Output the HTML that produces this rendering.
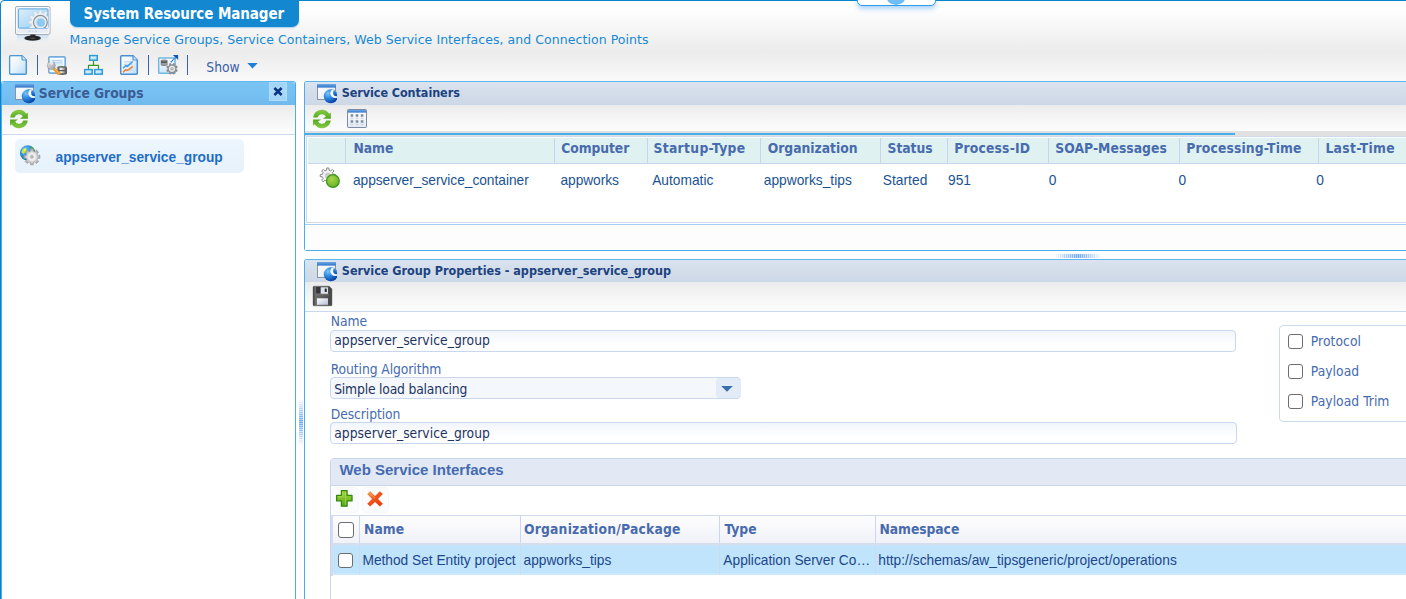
<!DOCTYPE html>
<html><head><meta charset="utf-8"><title>System Resource Manager</title>
<style>
*{box-sizing:border-box;margin:0;padding:0}
html,body{width:1406px;height:599px;overflow:hidden;background:#fff}
body{position:relative;font-family:"Liberation Sans",sans-serif;font-size:13.75px}
.a,.t,svg{position:absolute}
svg{overflow:visible}
.t{white-space:nowrap;line-height:1}
.tah{font-family:"DejaVu Sans Condensed","DejaVu Sans","Liberation Sans",sans-serif}
.ver{font-family:"DejaVu Sans","Liberation Sans",sans-serif}
.ari{font-family:"Liberation Sans",sans-serif}
#win{left:0;top:0;width:1420px;height:620px;border:1px solid #0a82cc;border-radius:4px 0 0 0;background:linear-gradient(#fff 0,#fff 6px,#ececec 50px,#eee 56px,#fafafa 80px,#fff 81px)}
#tab{left:70px;top:0;width:229px;height:27px;background:#1388d0;border-radius:0 0 7px 7px;box-shadow:0 1px 1.5px rgba(20,135,207,.35)}
#topw{left:857px;top:-6px;width:79px;height:12px;background:#fff;border:1px solid #2f9ce6;border-radius:5px;box-shadow:0 3px 5px rgba(70,160,240,.45);overflow:hidden}
#topw i{position:absolute;left:28px;top:-9.500px;width:20px;height:19px;border-radius:50%;background:#6ebcf8}
.sep{width:1px;height:20px;top:55px;background:#3a62ac}
/* panels */
.pn{border:1px solid #4aaeea;border-top-color:#5db6ee;background:#fff}
#lp{left:1px;top:81px;width:295px;height:530px;border-radius:3px 3px 0 0}
#lph{left:2px;top:82px;width:293px;height:23px;background:linear-gradient(#7ac4f4 0,#76c0f2 50%,#6fb9ee 100%);border-radius:3px 3px 0 0}
.tb{background:linear-gradient(#ebebeb,#f4f4f4 45%,#fdfdfd)}
#lptb{left:2px;top:105px;width:293px;height:30px;border-bottom:1px solid #c9d8ec}
#cls{left:269px;top:82px;width:18px;height:19px;background:linear-gradient(#a0d3f7,#aedaf8 50%,#a0d2f6);border:1px solid #b2dbf8}
#ti{left:15px;top:139px;width:229px;height:34px;border-radius:5px;background:linear-gradient(#edf6fd,#e6f1fa)}
#vh{opacity:.85;left:299px;top:398px;width:4px;height:48px;background:repeating-linear-gradient(#4f95ea 0,#4f95ea 1px,#a9c9f4 1px,#a9c9f4 2px);-webkit-mask-image:linear-gradient(transparent,#000 50%,transparent);mask-image:linear-gradient(transparent,#000 50%,transparent)}
#hh{opacity:.85;left:1054px;top:254px;width:48px;height:4px;background:repeating-linear-gradient(90deg,#4f95ea 0,#4f95ea 1px,#a9c9f4 1px,#a9c9f4 2px);-webkit-mask-image:linear-gradient(90deg,transparent,#000 50%,transparent);mask-image:linear-gradient(90deg,transparent,#000 50%,transparent)}
#p1{left:304px;top:81px;width:1120px;height:170px;border-radius:3px 0 0 3px}
#p2{left:304px;top:259px;width:1120px;height:360px;border-radius:3px 0 0 0}
.ph{left:305px;width:1110px;border-radius:2px 0 0 0;background:linear-gradient(#dae3ef,#d3ddea 50%,#cdd8e7)}
#p1h{top:82px;height:23px;border-radius:3px 0 0 0}
#p2h{top:260px;height:22px;border-radius:3px 0 0 0}
#p1tb{left:305px;top:105px;width:1110px;height:26px}
#p2tb{left:305px;top:282px;width:1110px;height:30px;border-bottom:1px solid #c9d8ec}
#gband{left:305px;top:131px;width:1110px;height:5px;background:#e1e1e1}
#bline{left:305px;top:133px;width:930px;height:2px;background:#46aee9}
#g1{left:306px;top:136px;width:1110px;height:87px;border:1px solid #d0daee;background:#fff}
#g1h{left:308px;top:138px;width:1100px;height:26px;background:#dff1f1;border-bottom:1px solid #c9d5ea}
.cs{width:1px;top:138px;height:25px;background:#c9d3ec}
#g1f{left:305px;top:224px;width:1110px;height:26px;border-top:1px solid #a9cdf0;background:#fdfdfd}
/* form */
.inp{height:22px;border:1px solid #c9d7ec;border-radius:4px;background:linear-gradient(#f1f5fa,#fff 70%)}
#sel{background:#f4f7fc}
#selb{left:716px;top:378px;width:25px;height:20px;background:#e3ebf6;border-radius:4px}
#fs{left:1279px;top:325px;width:140px;height:97px;border:1px solid #cddaee;border-radius:4px}
.cb{width:15px;height:15px;border:1.4px solid #6d6d6d;border-radius:3px;background:#fff}
#ws{left:330px;top:458px;width:1090px;height:160px;border:1px solid #c9d5ea;border-radius:4px 0 0 0;background:#fff}
#wsh{left:331px;top:459px;width:1080px;height:27px;background:#e2e8f4;border-bottom:1px solid #cbd6ea;border-radius:3px 0 0 0}
#g2h{left:331px;top:515px;width:1080px;height:28px;background:linear-gradient(#fdfdfe,#f1f2f8);border-top:1px solid #cfd9ec}
#g2b{left:331px;top:543px;width:1080px;height:3.400px;background:linear-gradient(#d6ddec 0,#d6ddec 2px,#c8e3f7 2px)}
#g2l{left:331px;top:516px;width:2px;height:60px;background:#d4ddf0}
#g2r{left:333px;top:546.400px;width:1080px;height:28.900px;background:#bfe4fb;border-bottom:2px solid #cbe9fc}
.cs2{width:1px;top:516px;height:27px;background:#cdd6ec}
.rs{width:1px;top:546px;height:29px;background:#cadcec}
.tbb{width:27px;height:26px;border-radius:5px;background:#fbfcfd;border:1px solid #f6f7fa}
#tabt{left:83.5px;top:7.0px;font-size:15px;color:#fff;font-weight:bold;letter-spacing:-0.091px;}
#sub{left:69.5px;top:34.0px;font-size:12.5px;color:#1889d2;letter-spacing:0.063px;}
#show{left:206.3px;top:61.0px;font-size:13.75px;color:#3a5fa8;}
#sg{left:38.8px;top:87.0px;font-size:13.75px;color:#3c5c94;font-weight:bold;letter-spacing:-0.062px;}
#tree{left:55.5px;top:151.0px;font-size:13.75px;color:#1e6ec8;font-weight:bold;letter-spacing:-0.009px;}
#sc{left:341.7px;top:87.0px;font-size:12.5px;color:#1c4280;font-weight:bold;letter-spacing:-0.071px;}
#h1{left:353.4px;top:142.0px;font-size:13.75px;color:#486bad;font-weight:bold;}
#h2{left:561.3px;top:142.0px;font-size:13.75px;color:#486bad;font-weight:bold;letter-spacing:-0.086px;}
#h3{left:653.5px;top:142.0px;font-size:13.75px;color:#486bad;font-weight:bold;letter-spacing:0.318px;}
#h4{left:767.7px;top:142.0px;font-size:13.75px;color:#486bad;font-weight:bold;letter-spacing:-0.009px;}
#h5{left:887.6px;top:142.0px;font-size:13.75px;color:#486bad;font-weight:bold;letter-spacing:-0.06px;}
#h6{left:954.2px;top:142.0px;font-size:13.75px;color:#486bad;font-weight:bold;letter-spacing:0.189px;}
#h7{left:1055.3px;top:142.0px;font-size:13.75px;color:#486bad;font-weight:bold;letter-spacing:0.042px;}
#h8{left:1186.3px;top:142.0px;font-size:13.75px;color:#486bad;font-weight:bold;letter-spacing:0.15px;}
#h9{left:1325.4px;top:142.0px;font-size:13.75px;color:#486bad;font-weight:bold;letter-spacing:0.325px;}
#r1{left:352.9px;top:174.0px;font-size:13.75px;color:#1b5392;letter-spacing:-0.027px;}
#r2{left:560.5px;top:174.0px;font-size:13.75px;color:#1b5392;letter-spacing:-0.071px;}
#r3{left:652.2px;top:174.0px;font-size:13.75px;color:#1b5392;}
#r4{left:763.8px;top:174.0px;font-size:13.75px;color:#1b5392;letter-spacing:0.008px;}
#r5{left:882.7px;top:174.0px;font-size:13.75px;color:#1b5392;letter-spacing:0.05px;}
#r6{left:948.0px;top:174.0px;font-size:13.75px;color:#1b5392;}
#r7{left:1048.8px;top:174.0px;font-size:13.75px;color:#1b5392;}
#r8{left:1178.6px;top:174.0px;font-size:13.75px;color:#1b5392;}
#r9{left:1316.2px;top:174.0px;font-size:13.75px;color:#1b5392;}
#sgp{left:341.8px;top:265.0px;font-size:12.5px;color:#1c4280;font-weight:bold;letter-spacing:-0.016px;}
#l1{left:330.7px;top:315.0px;font-size:13.75px;color:#456bb0;}
#l2{left:330.7px;top:363.0px;font-size:13.75px;color:#456bb0;letter-spacing:-0.081px;}
#l3{left:330.7px;top:408.0px;font-size:13.75px;color:#456bb0;letter-spacing:-0.07px;}
#v1{left:334.2px;top:334.0px;font-size:13.75px;color:#1d3460;letter-spacing:0.032px;}
#v2{left:334.2px;top:383.0px;font-size:13.75px;color:#1d3460;letter-spacing:-0.185px;}
#v3{left:334.2px;top:427.0px;font-size:13.75px;color:#1d3460;letter-spacing:0.032px;}
#c1{left:1310.8px;top:335.0px;font-size:13.75px;color:#456bb0;letter-spacing:0.057px;}
#c2{left:1310.8px;top:365.0px;font-size:13.75px;color:#456bb0;letter-spacing:0.017px;}
#c3{left:1310.8px;top:395.0px;font-size:13.75px;color:#456bb0;letter-spacing:0.036px;}
#wsi{left:339.4px;top:462.0px;font-size:15px;color:#456bb0;font-weight:bold;letter-spacing:0.01px;}
#gh1{left:364.1px;top:523.0px;font-size:13.75px;color:#486bad;font-weight:bold;}
#gh2{left:524.0px;top:523.0px;font-size:13.75px;color:#486bad;font-weight:bold;letter-spacing:0.2px;}
#gh3{left:724.5px;top:523.0px;font-size:13.75px;color:#486bad;font-weight:bold;}
#gh4{left:879.5px;top:523.0px;font-size:13.75px;color:#486bad;font-weight:bold;letter-spacing:-0.062px;}
#q1{left:362.5px;top:554.0px;font-size:13.75px;color:#22468a;letter-spacing:-0.021px;}
#q2{left:523.5px;top:554.0px;font-size:13.75px;color:#22468a;}
#q3{left:723.3px;top:554.0px;font-size:13.75px;color:#22468a;letter-spacing:0.005px;}
#q4{left:878.3px;top:554.0px;font-size:13.75px;color:#22468a;letter-spacing:0.009px;}
</style></head><body>
<div id="win" class="a"></div>
<div id="topw" class="a"><i></i></div>
<div id="tab" class="a"></div>
<svg style="left:14px;top:5px" width="38" height="40" viewBox="14 5 38 40">
<defs>
<linearGradient id="scr" x1="0" y1="0" x2="1" y2="1"><stop offset="0" stop-color="#dceefc"/><stop offset=".55" stop-color="#b3dbf7"/><stop offset="1" stop-color="#86c6f1"/></linearGradient>
<linearGradient id="refl" x1="0" y1="0" x2="0" y2="1"><stop offset="0" stop-color="#b9d9f3" stop-opacity=".8"/><stop offset="1" stop-color="#d9ebf9" stop-opacity="0"/></linearGradient>
<clipPath id="scrc"><rect x="18.5" y="9" width="29.5" height="19"/></clipPath>
<radialGradient id="base"><stop offset="0" stop-color="#555"/><stop offset=".6" stop-color="#1c1c1c"/><stop offset="1" stop-color="#333"/></radialGradient>
</defs>
<rect x="17" y="34.5" width="31.5" height="8.5" fill="url(#refl)"/>
<rect x="15.5" y="6.5" width="34.5" height="28" rx="1.5" fill="#e8ecf5" stroke="#a2aeb9" stroke-width="1"/>
<rect x="16.5" y="7.5" width="32.5" height="26" rx="1" fill="none" stroke="#f8f9fc" stroke-width="1"/>
<rect x="18.4" y="8.9" width="29.6" height="19.2" rx="1" fill="url(#scr)" stroke="#5aaae3" stroke-width="1"/>
<g clip-path="url(#scrc)">
<g transform="translate(40.400 22.300)">
<path d="M-1.45 -9.19L-1.08 -12.15L1.08 -12.15L1.45 -9.19L3.33 -8.68L5.14 -11.07L7.02 -9.98L5.85 -7.23L7.23 -5.85L9.98 -7.02L11.07 -5.14L8.68 -3.33L9.19 -1.45L12.15 -1.08L12.15 1.08L9.19 1.45L8.68 3.33L11.07 5.14L9.98 7.02L7.23 5.85L5.85 7.23L7.02 9.98L5.14 11.07L3.33 8.68L1.45 9.19L1.08 12.15L-1.08 12.15L-1.45 9.19L-3.33 8.68L-5.14 11.07L-7.02 9.98L-5.85 7.23L-7.23 5.85L-9.98 7.02L-11.07 5.14L-8.68 3.33L-9.19 1.45L-12.15 1.08L-12.15 -1.08L-9.19 -1.45L-8.68 -3.33L-11.07 -5.14L-9.98 -7.02L-7.23 -5.85L-5.85 -7.23L-7.02 -9.98L-5.14 -11.07L-3.33 -8.68z" fill="#eef0f2" stroke="#c5ced6" stroke-width=".5"/>
<circle r="6.900" fill="#c5d9e8" stroke="#8a959d" stroke-width="1.300"/>
<circle r="5.300" fill="none" stroke="#e4edf3" stroke-width="1.500"/>
<circle cx=".6" cy=".4" r="3.900" fill="#8ccaf4"/>
</g></g>
<path d="M28.5 31.2h2M32.3 31.2h.8M35 31.2h2" stroke="#aab4d2" stroke-width=".6"/>
<path d="M30.4 34.6h5v2.6h-5z" fill="#2a2a2a"/>
<ellipse cx="32.6" cy="38.2" rx="8.3" ry="2.6" fill="url(#base)"/>
</svg>
<svg style="left:8px;top:54px" width="20" height="22" viewBox="8 54 20 22">
<defs><linearGradient id="dg" x1="0" y1="0" x2="1" y2="1"><stop offset="0" stop-color="#fff"/><stop offset=".45" stop-color="#e9f4fd"/><stop offset="1" stop-color="#b9dcf8"/></linearGradient></defs>
<path d="M10.6 55.7h11.4l4.3 4.3v13.3q0 .9-.9.9h-14.8q-.9 0-.9-.9v-16.7q0-.9.9-.9z" fill="url(#dg)" stroke="#4b98d6" stroke-width="1.5"/>
<path d="M10.6 56.9h10.6M10.9 57v16" stroke="#fff" stroke-width=".8" opacity=".7" fill="none"/>
<path d="M22 55.7v3.6q0 .7.7.7h3.6" fill="#cfe6f9" stroke="#4b98d6" stroke-width="1.2"/>
</svg>
<svg style="left:46px;top:54px" width="22" height="22" viewBox="46 54 22 22">
<defs><linearGradient id="dbg" x1="0" y1="0" x2="1" y2="0"><stop offset="0" stop-color="#8a8a8a"/><stop offset=".3" stop-color="#fafafa"/><stop offset=".65" stop-color="#b5b5b5"/><stop offset="1" stop-color="#6a6a6a"/></linearGradient>
<linearGradient id="wg" x1="0" y1="0" x2="1" y2="1"><stop offset="0" stop-color="#ececec"/><stop offset="1" stop-color="#9a9a9a"/></linearGradient></defs>
<rect x="48.800" y="56.800" width="16.400" height="16.300" rx="1.300" fill="#fff" stroke="#75acdc" stroke-width="1.700"/>
<rect x="50.700" y="58.700" width="12.600" height="12.500" fill="#ddeffc"/>
<path d="M51.500 58.900h11" stroke="#fff" stroke-width="1.200"/>
<path d="M52 60.600h10M52 62.800h10" stroke="#aed3f0" stroke-width="1"/>
<path d="M57.400 67.200v6q0 1.700 4.800 1.700t4.800-1.700v-6z" fill="#5e5e5e"/>
<ellipse cx="62.200" cy="67.200" rx="4.800" ry="1.300" fill="#707070"/>
<rect x="58.800" y="67.800" width="6.800" height="2.100" rx="1" fill="url(#dbg)"/><rect x="58.800" y="71.200" width="6.800" height="2.100" rx="1" fill="url(#dbg)"/>
<path d="M52.800 69.600l2.100-2.100 5.700 5.300-.7 1.600-2.500.3z" fill="#f0962a"/><path d="M54.200 68.500l5.300 4.900" stroke="#fac168" stroke-width=".9"/>
<circle cx="51.300" cy="65.500" r="4" fill="url(#wg)" stroke="#8f8f8f" stroke-width=".5"/>
<path d="M50.300 61v2.600q0 1.200 1.200 1.200t1.200-1.200v-2.600z" fill="#e3f1fc"/>
</svg>
<svg style="left:83px;top:54px" width="22" height="22" viewBox="83 54 22 22">
<defs><linearGradient id="bx" x1="0" y1="0" x2="1" y2="1"><stop offset="0" stop-color="#eaf5fd"/><stop offset="1" stop-color="#b5dbf6"/></linearGradient></defs>
<path d="M93.500 61v4.500M88.500 69v-3.600h10v3.600" fill="none" stroke="#3a9a1e" stroke-width="1.200"/>
<rect x="89.700" y="55.600" width="7.600" height="4.600" fill="url(#bx)" stroke="#2b9bdb" stroke-width="1.500"/>
<rect x="84.700" y="69.600" width="7.500" height="4.600" fill="url(#bx)" stroke="#2b9bdb" stroke-width="1.500"/>
<rect x="94.800" y="69.600" width="7.500" height="4.600" fill="url(#bx)" stroke="#2b9bdb" stroke-width="1.500"/>
</svg>
<svg style="left:119px;top:54px" width="20" height="22" viewBox="119 54 20 22">
<path d="M121.600 55.700h11.400l4.300 4.300v13.300q0 .9-.9.900h-14.800q-.9 0-.9-.9v-16.700q0-.9.9-.9z" fill="url(#dg)" stroke="#4b8fd2" stroke-width="1.500"/>
<path d="M133 55.700v3.600q0 .7.700.7h3.600" fill="#cfe6f9" stroke="#4b8fd2" stroke-width="1.200"/>
<path d="M123.800 61.800h8.500M123.800 64.300h8.500M123.800 70h8.500" stroke="#c3ccd4" stroke-width=".9"/>
<path d="M123 68.300l2.800-2.600 1.700.6 5.100-4.800" fill="none" stroke="#3d9be6" stroke-width="1.500"/>
<path d="M123 72.300l2.800-2.600 1.700.7 5.300-3.900" fill="none" stroke="#ee8640" stroke-width="1.600"/>
</svg>
<svg style="left:157px;top:54px" width="22" height="22" viewBox="157 54 22 22">
<defs><linearGradient id="pg5" x1="0" y1="0" x2="0" y2="1"><stop offset="0" stop-color="#fff"/><stop offset="1" stop-color="#cde6f9"/></linearGradient></defs>
<rect x="158.700" y="57.900" width="16.400" height="15.300" rx=".6" fill="url(#pg5)" stroke="#6fbadf" stroke-width="1.500"/>
<path d="M160.800 60.300v4.700q0 .8 3.300.8t3.300-.8v-4.700z" fill="#555"/><ellipse cx="164.100" cy="60.400" rx="3.300" ry=".9" fill="#8b8b8b"/><path d="M161.300 64h5.600" stroke="#e6e6e6" stroke-width="1"/><path d="M161.800 61.900h4.600" stroke="#777" stroke-width=".8"/>
<path d="M170.800 62.200l5-5" stroke="#1f6fd2" stroke-width="1.300" stroke-dasharray="1.300 .5"/>
<path d="M172.800 55h5.300v4.800z" fill="#0d57c4"/>
<g transform="translate(172 68.800)">
<g fill="#8d8d8d" transform="rotate(22.5)"><rect id="t5" x="-1.100" y="-5.800" width="2.200" height="3"/><use href="#t5" transform="rotate(45)"/><use href="#t5" transform="rotate(90)"/><use href="#t5" transform="rotate(135)"/><use href="#t5" transform="rotate(180)"/><use href="#t5" transform="rotate(225)"/><use href="#t5" transform="rotate(270)"/><use href="#t5" transform="rotate(315)"/></g>
<circle r="3.900" fill="#e6e6e6" stroke="#8d8d8d" stroke-width="1.300"/><circle r="1.500" fill="#9a9a9a"/><circle r=".7" fill="#eee"/>
</g>
</svg>

<div class="a sep" style="left:37px"></div><div class="a sep" style="left:148px"></div><div class="a sep" style="left:187px"></div>
<svg style="left:247px;top:63px" width="11" height="6" viewBox="0 0 11 6"><path d="M0.3 0h10.4L5.5 5.6z" fill="#1e7fd6"/></svg>

<div id="lp" class="a pn"></div>
<div id="lph" class="a"></div>
<div id="cls" class="a"></div>
<svg style="left:273px;top:87px" width="10" height="9" viewBox="0 0 10 9"><path d="M1.4 1L8.6 8M8.6 1L1.4 8" stroke="#0b3384" stroke-width="2.600" fill="none"/></svg>
<div id="lptb" class="a tb"></div>
<div id="ti" class="a"></div>
<div id="vh" class="a"></div>

<div id="p1" class="a pn"></div>
<div id="p1h" class="a ph"></div>
<div id="p1tb" class="a tb"></div>
<div id="gband" class="a"></div><div id="bline" class="a"></div>
<div id="g1" class="a"></div><div id="g1h" class="a"></div>
<div class="a cs" style="left:345px"></div><div class="a cs" style="left:554px"></div><div class="a cs" style="left:647px"></div><div class="a cs" style="left:760px"></div><div class="a cs" style="left:880px"></div><div class="a cs" style="left:947px"></div><div class="a cs" style="left:1048px"></div><div class="a cs" style="left:1179px"></div><div class="a cs" style="left:1318px"></div>
<div id="g1f" class="a"></div>
<div id="hh" class="a"></div>

<div id="p2" class="a pn"></div>
<div id="p2h" class="a ph"></div>
<div id="p2tb" class="a tb"></div>
<div class="a inp" style="left:330px;top:330px;width:906px"></div>
<div class="a inp" id="sel" style="left:330px;top:377px;width:411px"></div><div id="selb" class="a"></div>
<svg style="left:721px;top:386px" width="12" height="6" viewBox="0 0 12 6"><path d="M0.2 0h11.6L6 5.8z" fill="#3a6db0"/></svg>
<div class="a inp" style="left:330px;top:422px;width:907px"></div>
<div id="fs" class="a"></div>
<div class="a cb" style="left:1288px;top:334px"></div><div class="a cb" style="left:1288px;top:364px"></div><div class="a cb" style="left:1288px;top:394px"></div>
<div id="ws" class="a"></div><div id="wsh" class="a"></div>
<div class="a tbb" style="left:332px;top:487px"></div><div class="a tbb" style="left:362px;top:487px"></div>
<div id="g2h" class="a"></div><div id="g2b" class="a"></div><div id="g2r" class="a"></div><div id="g2l" class="a"></div>
<div class="a cs2" style="left:359px"></div><div class="a cs2" style="left:520px"></div><div class="a cs2" style="left:719px"></div><div class="a cs2" style="left:875px"></div>
<div class="a rs" style="left:359px"></div><div class="a rs" style="left:520px"></div><div class="a rs" style="left:719px"></div><div class="a rs" style="left:875px"></div>
<div class="a cb" style="left:337.500px;top:522px;width:16px;height:16px"></div><div class="a cb" style="left:338px;top:553px"></div>
<svg width="0" height="0" style="left:0;top:0"><defs>
<linearGradient id="wtb" x1="0" y1="0" x2="0" y2="1"><stop offset="0" stop-color="#6fa9e6"/><stop offset="1" stop-color="#2f74c8"/></linearGradient>
<linearGradient id="wbd" x1="0" y1="0" x2="1" y2="1"><stop offset="0" stop-color="#fff"/><stop offset="1" stop-color="#dfe7f2"/></linearGradient>
<radialGradient id="ball" cx=".3" cy=".3" r=".8"><stop offset="0" stop-color="#7cc4f6"/><stop offset=".45" stop-color="#2a86de"/><stop offset="1" stop-color="#06369a"/></radialGradient>
<linearGradient id="grn" x1="0" y1="0" x2="0" y2="1"><stop offset="0" stop-color="#86cc44"/><stop offset="1" stop-color="#55a622"/></linearGradient>
<clipPath id="wclip"><rect x="0" y="0" width="20" height="20"/></clipPath><clipPath id="bclip"><circle cx="13.800" cy="12.200" r="6.600"/></clipPath><linearGradient id="ball2" x1="0" y1="0" x2="0" y2="1"><stop offset="0" stop-color="#4aa0ea"/><stop offset="1" stop-color="#0b4db4"/></linearGradient>
<g id="wico">
<rect x=".5" y=".5" width="18" height="15" fill="url(#wbd)" stroke="#8a94a6" stroke-width="1"/>
<rect x="0" y="0" width="19" height="3.600" fill="url(#wtb)"/>
<g clip-path="url(#wclip)">
<circle cx="13.800" cy="12.200" r="7" fill="url(#ball)"/>
<g clip-path="url(#bclip)"><circle cx="18.300" cy="9.200" r="4.900" fill="#fff" opacity=".95"/>
<circle cx="19.600" cy="8.700" r="3.500" fill="url(#ball2)"/></g>
</g>
</g>
<g id="rfr">
<path id="rfh" d="M.15 7.600A8.850 8.850 0 0 1 16.280 3.770L17.900 2.400V8.700H9.900L12.850 6.480A4.500 4.500 0 0 0 4.640 7.600z" fill="url(#grn)"/>
<use href="#rfh" transform="rotate(180 8.960 9.050)"/>
</g>
</defs></svg>
<svg style="left:15px;top:84px" width="22" height="19" viewBox="0 0 22 19"><use href="#wico"/></svg>
<svg style="left:317px;top:84px" width="22" height="19" viewBox="0 0 22 19"><use href="#wico"/></svg>
<svg style="left:317px;top:262px" width="22" height="19" viewBox="0 0 22 19"><use href="#wico"/></svg>
<svg style="left:10px;top:110px" width="18" height="18" viewBox="0 0 18 18"><use href="#rfr"/></svg>
<svg style="left:313px;top:110px" width="18" height="18" viewBox="0 0 18 18"><use href="#rfr"/></svg>
<svg style="left:347px;top:109px" width="20" height="19" viewBox="0 0 20 19">
<defs><linearGradient id="cbd" x1="0" y1="0" x2="0" y2="1"><stop offset="0" stop-color="#fff"/><stop offset="1" stop-color="#e4e9f2"/></linearGradient></defs>
<rect x=".5" y=".5" width="19" height="18" rx=".8" fill="url(#cbd)" stroke="#7b8aa6" stroke-width="1"/>
<rect x="1" y="1" width="18" height="2.600" fill="url(#wtb)"/>
<g fill="#7a89a2"><rect x="3.600" y="5.300" width="2.600" height="2.400"/><rect x="8.700" y="5.300" width="2.600" height="2.400"/><rect x="13.800" y="5.300" width="2.600" height="2.400"/><rect x="3.600" y="11.300" width="2.600" height="2.400"/><rect x="8.700" y="11.300" width="2.600" height="2.400"/><rect x="13.800" y="11.300" width="2.600" height="2.400"/></g>
<path d="M3.600 9.300h2.600M8.700 9.300h2.600M13.800 9.300h2.600M3.600 15.400h2.600M8.700 15.400h2.600M13.800 15.400h2.600" stroke="#b9c3d4" stroke-width=".8"/>
</svg>
<svg style="left:19px;top:144px" width="22" height="22" viewBox="19 144 22 22">
<defs><radialGradient id="glb" cx=".35" cy=".3" r=".8"><stop offset="0" stop-color="#6cc4f8"/><stop offset=".5" stop-color="#2a8be0"/><stop offset="1" stop-color="#0b57b0"/></radialGradient>
<clipPath id="glc"><circle cx="27.600" cy="152.900" r="7.700"/></clipPath>
<radialGradient id="gr2" cx=".5" cy=".5" r=".5"><stop offset="0" stop-color="#f4f4f4"/><stop offset=".55" stop-color="#dddddd"/><stop offset="1" stop-color="#a2a2a2"/></radialGradient></defs>
<circle cx="27.600" cy="152.900" r="7.700" fill="url(#glb)"/>
<g clip-path="url(#glc)"><path d="M21.500 152.500q.3-3.800 3.700-4.600l1.500 1.200-1 2.600-2.400 2.200z" fill="#c9e83a"/><path d="M23.300 149.700l1.800-1.200.9.900-1.500 1.800z" fill="#f1f96a"/><path d="M30.500 146l3.500 1.500 1.300 3.500-2.600-.8-2.500-2z" fill="#3fae4a"/><path d="M22 156l2 2.800 1.500 2.500-3.800-2z" fill="#2f9a4a" opacity=".7"/></g>
<g transform="translate(31.900 156.800)">
<path d="M-1.65 -5.67L-1.47 -8.07L1.47 -8.07L1.65 -5.67L2.84 -5.17L4.66 -6.75L6.75 -4.66L5.17 -2.84L5.67 -1.65L8.07 -1.47L8.07 1.47L5.67 1.65L5.17 2.84L6.75 4.66L4.66 6.75L2.84 5.17L1.65 5.67L1.47 8.07L-1.47 8.07L-1.65 5.67L-2.84 5.17L-4.66 6.75L-6.75 4.66L-5.17 2.84L-5.67 1.65L-8.07 1.47L-8.07 -1.47L-5.67 -1.65L-5.17 -2.84L-6.75 -4.66L-4.66 -6.75L-2.84 -5.17z" fill="url(#gr2)" stroke="#9a9a9a" stroke-width=".6" stroke-linejoin="round"/>
<circle r="3.100" fill="#dadada" stroke="#f6f6f6" stroke-width="1.100"/><circle r="1.500" fill="#a9a9a9"/><circle r=".6" fill="#ddd"/>
</g>
</svg>
<svg style="left:319px;top:167px" width="22" height="22" viewBox="319 167 22 22">
<defs><radialGradient id="gb" cx=".4" cy=".35" r=".7"><stop offset="0" stop-color="#a4d648"/><stop offset=".7" stop-color="#7cba30"/><stop offset="1" stop-color="#5ea622"/></radialGradient></defs>
<g transform="translate(327.800 175.600)">
<path d="M-1.28 -5.35L-1.08 -7.62L1.08 -7.62L1.28 -5.35L2.87 -4.69L4.62 -6.16L6.16 -4.62L4.69 -2.87L5.35 -1.28L7.62 -1.08L7.62 1.08L5.35 1.28L4.69 2.87L6.16 4.62L4.62 6.16L2.87 4.69L1.28 5.35L1.08 7.62L-1.08 7.62L-1.28 5.35L-2.87 4.69L-4.62 6.16L-6.16 4.62L-4.69 2.87L-5.35 1.28L-7.62 1.08L-7.62 -1.08L-5.35 -1.28L-4.69 -2.87L-6.16 -4.62L-4.62 -6.16L-2.87 -4.69z" fill="#f4f4f4" stroke="#7d7d7d" stroke-width=".9" stroke-linejoin="round"/>
<circle r="2.600" fill="#cfcfcf" stroke="#b5b5b5" stroke-width=".5"/>
</g>
<circle cx="332.900" cy="181" r="6.400" fill="url(#gb)" stroke="#3a981c" stroke-width="1.200"/>
</svg>
<svg style="left:313px;top:286px" width="19" height="20" viewBox="0 0 19 20">
<defs><linearGradient id="fl" x1="0" y1="0" x2="1" y2="0"><stop offset="0" stop-color="#3d3d3d"/><stop offset=".12" stop-color="#6b6b6b"/><stop offset=".5" stop-color="#5c5c5c"/><stop offset="1" stop-color="#444"/></linearGradient>
<linearGradient id="lb" x1="0" y1="0" x2="1" y2="1"><stop offset="0" stop-color="#fff"/><stop offset="1" stop-color="#b5bed6"/></linearGradient></defs>
<path d="M1 .2h15.200l2.700 2.700v16q0 .9-.9.900h-17q-.9 0-.9-.9v-17.800q0-.9.900-.9z" fill="url(#fl)" stroke="#3a3a3a" stroke-width=".4"/>
<rect x="3.200" y="1" width="4.600" height="6.300" fill="#353535"/>
<rect x="7.700" y="1.300" width="7.300" height="6.500" fill="#dde2ef"/><rect x="11.700" y="2.500" width="2.100" height="3.500" rx=".6" fill="#2e2e2e"/>
<path d="M3 8.800h13" stroke="#7a7a7a" stroke-width=".8"/>
<rect x="3.900" y="12.300" width="11.100" height="6.500" fill="url(#lb)"/>
</svg>
<svg style="left:335px;top:489px" width="19" height="19" viewBox="335 489 19 19">
<defs><linearGradient id="pl" x1="0" y1="0" x2="0" y2="1"><stop offset="0" stop-color="#a6d83a"/><stop offset="1" stop-color="#58a818"/></linearGradient></defs>
<path d="M341.400 490.600h5.700v4.800h4.900v5.500h-4.900v5.300h-5.700v-5.300h-4.800v-5.500h4.800z" fill="url(#pl)" stroke="#348a0e" stroke-width="1.300" stroke-linejoin="round"/>
<path d="M342.800 492v4.800h-4.800M345.600 492v13" stroke="#c4e86a" stroke-width=".7" fill="none" opacity=".7"/>
</svg>
<svg style="left:366px;top:490px" width="18" height="18" viewBox="366 490 18 18">
<defs><linearGradient id="xr" x1="0" y1="0" x2="1" y2="1"><stop offset="0" stop-color="#f9a14e"/><stop offset=".45" stop-color="#f0541c"/><stop offset="1" stop-color="#e8380c"/></linearGradient></defs>
<path d="M370.100 491.200l4.900 4.700 4.900-4.700 2.900 2.900-4.800 4.800 4.800 4.800-2.900 2.900-4.900-4.700-4.900 4.700-2.900-2.900 4.800-4.800-4.800-4.800z" fill="url(#xr)"/>
<path d="M369.700 493.200l5.300 5" stroke="#fbc27c" stroke-width=".9" opacity=".8"/>
</svg>

<div id="tabt" class="t tah">System Resource Manager</div>
<div id="sub" class="t ver">Manage Service Groups, Service Containers, Web Service Interfaces, and Connection Points</div>
<div id="show" class="t tah">Show</div>
<div id="sg" class="t tah">Service Groups</div>
<div id="tree" class="t ari">appserver_service_group</div>
<div id="sc" class="t tah">Service Containers</div>
<div id="h1" class="t tah">Name</div>
<div id="h2" class="t tah">Computer</div>
<div id="h3" class="t tah">Startup-Type</div>
<div id="h4" class="t tah">Organization</div>
<div id="h5" class="t tah">Status</div>
<div id="h6" class="t tah">Process-ID</div>
<div id="h7" class="t tah">SOAP-Messages</div>
<div id="h8" class="t tah">Processing-Time</div>
<div id="h9" class="t tah">Last-Time</div>
<div id="r1" class="t ari">appserver_service_container</div>
<div id="r2" class="t ari">appworks</div>
<div id="r3" class="t ari">Automatic</div>
<div id="r4" class="t ari">appworks_tips</div>
<div id="r5" class="t ari">Started</div>
<div id="r6" class="t ari">951</div>
<div id="r7" class="t ari">0</div>
<div id="r8" class="t ari">0</div>
<div id="r9" class="t ari">0</div>
<div id="sgp" class="t tah">Service Group Properties - appserver_service_group</div>
<div id="l1" class="t tah">Name</div>
<div id="l2" class="t tah">Routing Algorithm</div>
<div id="l3" class="t tah">Description</div>
<div id="v1" class="t tah">appserver_service_group</div>
<div id="v2" class="t tah">Simple load balancing</div>
<div id="v3" class="t tah">appserver_service_group</div>
<div id="c1" class="t tah">Protocol</div>
<div id="c2" class="t tah">Payload</div>
<div id="c3" class="t tah">Payload Trim</div>
<div id="wsi" class="t ari">Web Service Interfaces</div>
<div id="gh1" class="t tah">Name</div>
<div id="gh2" class="t tah">Organization/Package</div>
<div id="gh3" class="t tah">Type</div>
<div id="gh4" class="t tah">Namespace</div>
<div id="q1" class="t ari">Method Set Entity project</div>
<div id="q2" class="t ari">appworks_tips</div>
<div id="q3" class="t ari">Application Server Co…</div>
<div id="q4" class="t ari">http://schemas/aw_tipsgeneric/project/operations</div>
</body></html>
